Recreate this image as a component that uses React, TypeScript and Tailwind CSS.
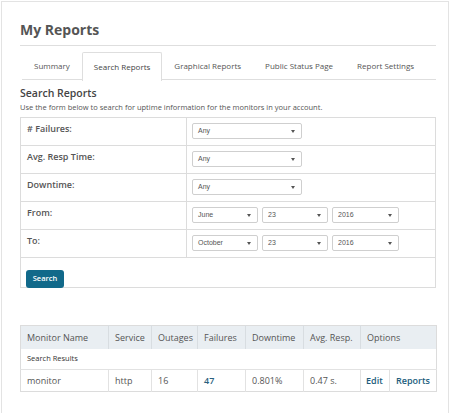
import React from 'react'

const tabs = ['Summary', 'Search Reports', 'Graphical Reports', 'Public Status Page', 'Report Settings']

const filters = ['# Failures:', 'Avg. Resp Time:', 'Downtime:']

const dates = [
  { label: 'From:', month: 'June', day: '23', year: '2016' },
  { label: 'To:', month: 'October', day: '23', year: '2016' },
]

const cols = ['Monitor Name', 'Service', 'Outages', 'Failures', 'Downtime', 'Avg. Resp.']
const colWidths = ['w-[88px]', 'w-[43px]', 'w-[46px]', 'w-[48px]', 'w-[58px]', 'w-[57px]', 'w-[29px]', 'w-[47px]']

function Caret() {
  return (
    <svg width="4" height="3" viewBox="0 0 4 3" className="shrink-0">
      <path d="M0 0 L4 0 L2 3 Z" fill="#555" />
    </svg>
  )
}

function Select({ value, w }: { value: string; w: string }) {
  return (
    <div
      className={`${w} h-[16px] flex items-center justify-between pl-[5px] pr-[6px] border border-[#cfcfcf] rounded-[2px] bg-white text-[7px] text-[#555]`}
      style={{ fontFamily: '"Liberation Sans", Arial, sans-serif' }}
    >
      <span>{value}</span>
      <Caret />
    </div>
  )
}

export default function App() {
  return (
    <div className="w-[453px] h-[413px] bg-white overflow-hidden pt-[1px] pl-[1px]" style={{ fontFamily: '"Open Sans", sans-serif' }}>
      <div className="w-[448px] h-[430px] border border-[#e3e3e3] pt-[18px] pl-[18px]">
        <div className="w-[416px]">
          <h1 className="text-[14px] leading-[20px] font-bold text-[#555]">My Reports</h1>
          <div className="mt-[5px] border-t border-[#dedede]" />

          <div className="mt-[6px] ml-[2px] flex border-b border-[#dedede] h-[28px]">
            {tabs.map((t, i) => (
              <div
                key={t}
                className={
                  i === 1
                    ? 'px-[11px] flex items-center text-[8px] text-[#444] bg-white border border-b-0 border-[#dedede] rounded-t-[2px] -mb-[1px] h-[29px]'
                    : 'px-[11px] flex items-center text-[8px] text-[#555] border border-transparent'
                }
              >
                {t}
              </div>
            ))}
          </div>

          <h2 className="mt-[6px] text-[10.5px] leading-[15px] font-semibold text-[#444]">Search Reports</h2>
          <p className="mt-[1px] text-[7.5px] leading-[10px] text-[#555]">
            Use the form below to search for uptime information for the monitors in your account.
          </p>

          <div className="mt-[5px] border border-[#dcdcdc]">
            {filters.map((f) => (
              <div key={f} className="flex h-[28px] border-b border-[#dcdcdc]">
                <div className="w-[166px] pl-[6px] pt-[5px] text-[9px] leading-[12px] font-semibold text-[#555] border-r border-[#dcdcdc]">
                  {f}
                </div>
                <div className="pl-[5px] pt-[5px]">
                  <Select value="Any" w="w-[110px]" />
                </div>
              </div>
            ))}
            {dates.map((d) => (
              <div key={d.label} className="flex h-[28px] border-b border-[#dcdcdc]">
                <div className="w-[166px] pl-[6px] pt-[5px] text-[9px] leading-[12px] font-semibold text-[#555] border-r border-[#dcdcdc]">
                  {d.label}
                </div>
                <div className="pl-[5px] pt-[5px] flex gap-[4px]">
                  <Select value={d.month} w="w-[66px]" />
                  <Select value={d.day} w="w-[66px]" />
                  <Select value={d.year} w="w-[67px]" />
                </div>
              </div>
            ))}
            <div className="h-[29px] pl-[5px] pt-[5px]">
              <button className="w-[38px] h-[18px] rounded-[3px] bg-[#11698a] text-white text-[7.5px] font-semibold">
                Search
              </button>
            </div>
          </div>

          <table className="mt-[37px] w-[416px] table-fixed border-collapse border border-[#dcdcdc] text-[9px] text-[#555]">
            <colgroup>
              {colWidths.map((w, i) => (
                <col key={i} className={w} />
              ))}
            </colgroup>
            <thead>
              <tr className="h-[23px] bg-[#e9eef2]">
                {cols.map((c) => (
                  <th key={c} className="text-left font-normal pl-[6px] border-r border-[#d8dde1] whitespace-nowrap">
                    {c}
                  </th>
                ))}
                <th colSpan={2} className="text-left font-normal pl-[6px]">Options</th>
              </tr>
            </thead>
            <tbody>
              <tr className="h-[21px] border-b border-[#e2e2e2]">
                <td colSpan={8} className="pl-[6px] text-[7.5px] text-[#333]">Search Results</td>
              </tr>
              <tr className="h-[22px]">
                <td className="pl-[6px] border-r border-[#e2e2e2]">monitor</td>
                <td className="pl-[6px] border-r border-[#e2e2e2]">http</td>
                <td className="pl-[6px] border-r border-[#e2e2e2]">16</td>
                <td className="pl-[6px] border-r border-[#e2e2e2] text-[#2b5f7e] font-semibold">47</td>
                <td className="pl-[6px] border-r border-[#e2e2e2]">0.801%</td>
                <td className="pl-[6px] border-r border-[#e2e2e2]">0.47 s.</td>
                <td className="pl-[5px] border-r border-[#e2e2e2] text-[#215c7c] font-semibold">Edit</td>
                <td className="pl-[6px] text-[#215c7c] font-semibold">Reports</td>
              </tr>
            </tbody>
          </table>
        </div>
      </div>
    </div>
  )
}
